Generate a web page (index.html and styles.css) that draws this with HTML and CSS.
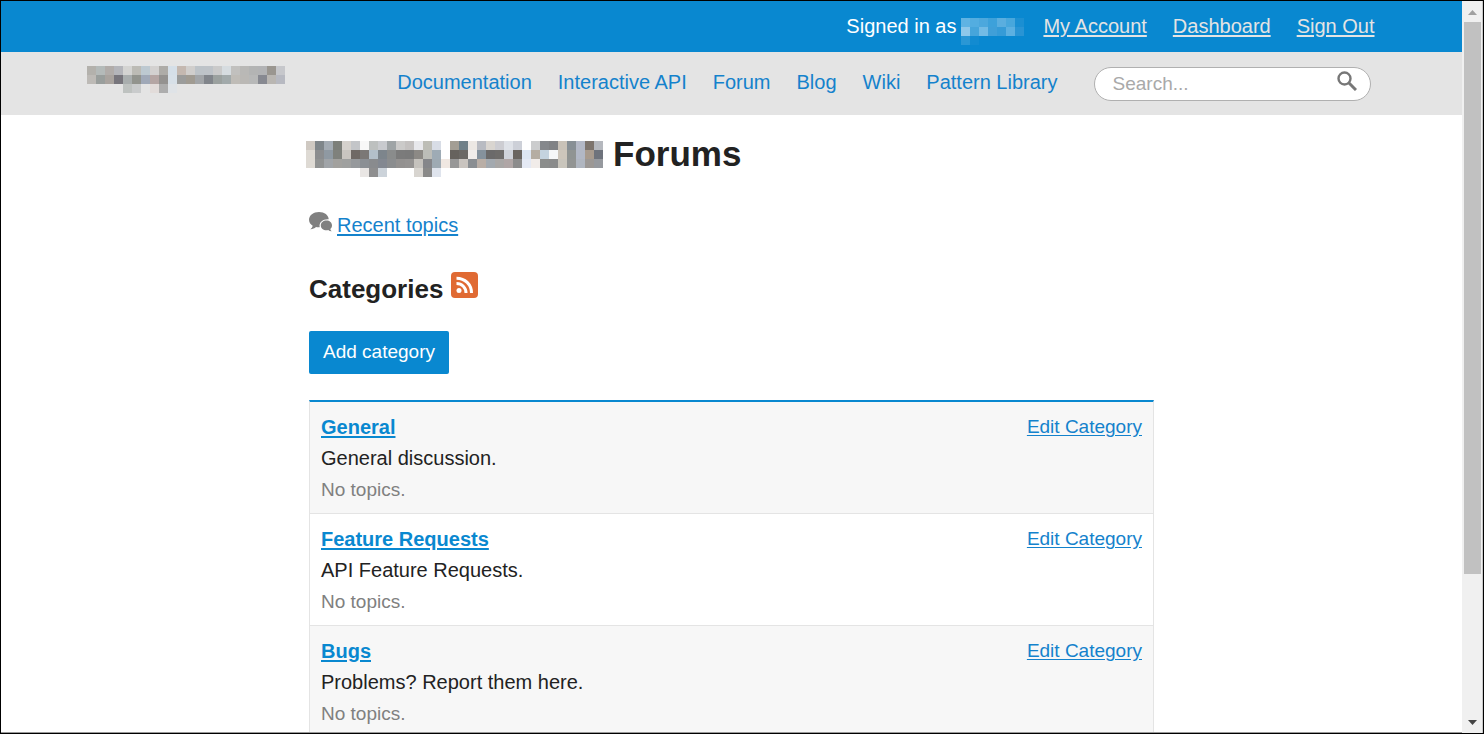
FILE: index.html
```html
<!DOCTYPE html>
<html lang="en">
<head>
<meta charset="utf-8">
<title>Forums</title>
<link rel="stylesheet" href="styles.css">
</head>
<body>
<div class="window">
  <div class="page">
    <div class="account-bar">
      <div class="wrap account-inner">
        <span class="signed-in">Signed in as <svg class="mosaic" data-name="user" role="img" aria-label="User name"></svg></span>
        <a href="#account">My Account</a>
        <a href="#dashboard">Dashboard</a>
        <a href="#signout">Sign Out</a>
      </div>
    </div>
    <header class="site-header">
      <div class="wrap header-inner">
        <a class="brand" href="#home"><svg class="mosaic" data-name="brand" role="img" aria-label="Site name"></svg></a>
        <nav class="main-nav">
          <a href="#docs">Documentation</a>
          <a href="#api">Interactive API</a>
          <a href="#forum">Forum</a>
          <a href="#blog">Blog</a>
          <a href="#wiki">Wiki</a>
          <a href="#patterns">Pattern Library</a>
        </nav>
        <form class="search" role="search">
          <input type="search" aria-label="Search" placeholder="Search...">
          <button type="button" aria-label="Submit search">
            <svg width="20" height="20" viewBox="0 0 20 20" fill="none" stroke="#777"><circle cx="7.5" cy="7.5" r="6" stroke-width="2.4"/><path d="M12 12l7 7" stroke-width="3"/></svg>
          </button>
        </form>
      </div>
    </header>
    <main class="content">
      <h1><svg class="mosaic" data-name="title" role="img" aria-label="Site name"></svg><span>Forums</span></h1>
      <p class="recent">
        <svg width="23" height="20" viewBox="0 0 23 20" fill="#808080"><path d="M10 0C4.500 0 0 3.400 0 7.700c0 2.500 1.400 4.600 3.700 6-.3 1.500-1.200 2.600-2.400 3.500 2.200.1 4.200-.7 5.700-2.100 1.200.2 2.500.3 3.700.1-.9-5 3.300-8.300 9-7.900C19.600 3.200 15.500 0 10 0z"/><path d="M17.500 8.600c-3.200 0-5.700 2.100-5.700 4.800s2.500 4.800 5.700 4.800c.6 0 1.200-.1 1.700-.2 1 .9 2.200 1.400 3.500 1.300-.8-.6-1.300-1.300-1.400-2.300 1.100-.9 1.700-2.200 1.700-3.600 0-2.700-2.400-4.800-5.500-4.800z"/></svg>
        <a href="#recent">Recent topics</a>
      </p>
      <div class="heading-row">
        <h2>Categories</h2>
        <a href="#feed" aria-label="Category feed"><svg width="27" height="26" viewBox="0 0 27 26"><rect width="27" height="26" rx="4" fill="#e06a33"/><circle cx="8" cy="18.500" r="2.500" fill="#fff"/><path d="M5.500 11.500c5.500 0 9.500 4 9.500 9.500M5.500 6.200c8.500 0 15 6.300 15 14.800" fill="none" stroke="#fff" stroke-width="3"/></svg></a>
      </div>
      <button class="add" type="button">Add category</button>
      <ul class="categories">
        <li>
          <div><h3><a href="#general">General</a></h3><p>General discussion.</p><p class="count">No topics.</p></div>
          <a class="edit" href="#edit-general">Edit Category</a>
        </li>
        <li>
          <div><h3><a href="#features">Feature Requests</a></h3><p>API Feature Requests.</p><p class="count">No topics.</p></div>
          <a class="edit" href="#edit-features">Edit Category</a>
        </li>
        <li>
          <div><h3><a href="#bugs">Bugs</a></h3><p>Problems? Report them here.</p><p class="count">No topics.</p></div>
          <a class="edit" href="#edit-bugs">Edit Category</a>
        </li>
      </ul>
    </main>
  </div>
  <div class="scrollbar" aria-hidden="true">
    <svg width="17" height="21" viewBox="0 0 17 21"><path d="M4 14l4.500-5 4.500 5z" fill="#a0a0a0"/></svg>
    <div class="track"><div class="thumb"></div></div>
    <svg width="17" height="21" viewBox="0 0 17 21"><path d="M4 8h9l-4.500 5z" fill="#444"/></svg>
  </div>
</div>
<script src="mosaic.js"></script>
</body>
</html>
```

FILE: styles.css
```css
* { box-sizing: border-box; }
body {
  margin: 0;
  background: #fff;
  color: #222;
  font: 20px/31px "Liberation Sans", Arial, sans-serif;
}
h1, h2, h3, p, ul { margin: 0; padding: 0; }
a { color: #1482cc; text-underline-offset: 2px; }
button, input { font-family: inherit; }
svg { display: block; flex: none; }

.window {
  display: flex;
  height: 100vh;
  border: 1px solid #000;
  overflow: hidden;
}
.page {
  flex: 1;
  min-width: 0;
  overflow: hidden;
  border-bottom: 1px solid #999;
}
.wrap { max-width: 1290px; margin: 0 auto; }

.account-bar { background: #0988d0; }
.account-inner {
  display: flex;
  justify-content: flex-end;
  gap: 26px;
  padding: 10px 2px 10px 0;
}
.account-inner a { color: #e4e4e4; }
.signed-in {
  display: flex;
  gap: 5px;
  height: 31px;
  color: #fff;
  white-space: nowrap;
}
.signed-in .mosaic { margin: 7px -7px 0 0; }

.site-header { background: #e4e4e4; }
.header-inner {
  display: flex;
  align-items: flex-start;
  padding: 14px 6px 14px 0;
}
.main-nav {
  display: flex;
  gap: 26px;
  margin: 1px 0 0 auto;
  white-space: nowrap;
}
.main-nav a { text-decoration: none; }
.search {
  display: flex;
  align-items: flex-start;
  width: 277px;
  height: 34px;
  margin: 1px 0 0 36px;
  padding: 0 13px 0 18px;
  border: 1px solid #b0b0b0;
  border-radius: 17px;
  background: #fff;
}
.search input {
  flex: 1;
  min-width: 0;
  height: 32px;
  padding: 0;
  border: 0;
  background: none;
  outline: none;
  font-size: 19px;
}
.search input::placeholder { color: #a9a9a9; }
.search button { padding: 3px 0 0; border: 0; background: none; }

.content { max-width: 845px; margin: 0 auto; padding-top: 26px; }
h1 {
  display: flex;
  gap: 10px;
  margin-left: -3px;
  font-size: 35px;
  line-height: 26px;
}
.recent {
  display: flex;
  gap: 5px;
  margin-top: 33px;
}
.recent svg { margin-top: 2px; }
.heading-row {
  display: flex;
  align-items: flex-start;
  gap: 8px;
  margin-top: 31px;
}
h2 { font-size: 26px; line-height: 34px; }
.add {
  display: block;
  margin-top: 25px;
  padding: 0 14px 2px;
  border: 0;
  border-radius: 2px;
  background: #0988d0;
  color: #fff;
  font-size: 19px;
  line-height: 41px;
}
.categories {
  margin-top: 26px;
  border: 1px solid #e4e4e4;
  border-top: 2px solid #0988d0;
  list-style: none;
}
.categories li {
  display: flex;
  justify-content: space-between;
  padding: 10px 11px 8px;
  border-bottom: 1px solid #e4e4e4;
}
.categories li:nth-child(odd) { background: #f7f7f7; }
h3 { font-size: 20px; line-height: 31px; }
h3 a { color: #0988d0; }
.count { color: #808080; font-size: 19px; }
.edit { font-size: 19px; line-height: 29px; }

.scrollbar {
  display: flex;
  flex-direction: column;
  padding: 0 1px 0 2px;
  border-right: 1px solid #c8c8c8;
  background: #f0f0f0;
}
.track { flex: 1; }
.thumb { height: 80%; background: #c1c1c1; }
```

FILE: mosaic.js
```js
// Each row lists hex colours; "-" leaves the cell empty.
const CELL = 9;
const mosaics = {
  user: [
    "5fb3e3 53ade0 4ca8dd 3da1da 5aaedf 48a7dc 1b8fd2",
    "8fc8ea 46a5db 72bbe5 3f9fd8 359bd7 5cb0e1 2994d4",
    "2a97d5 128bd1 - - - - -"
  ],
  brand: [
    "b3b1ac b4bab9 b1aca9 b4b5ba d4d4d2 bcbbb5 bdc9d1 d3d1d0 aeaca8 d5dfe8 c4b8b0 d0cecc bdc3c8 bec3c8 cacaca d6dce0 c1c0be b9b8b6 b3b4b4 b2b3b5 9a9690 c6c7cb",
    "bdbab6 999e9c a9a39e 77757c a9aeae 92948e a0a9b8 b5a6a4 949290 d7e0e8 9b9c9b a09b92 a2a5a8 81858b 9ba19f a2aaab bfbcb7 bab8b5 b7b8b8 878991 b9b6b2 b7b9c1",
    "- - - - bec2c0 c9cbcc - e2dcda adadad dfe3e7 - - - - - - - - - - - -"
  ],
  title: [
    "cfc9c2 7f868a a3abb3 7c7f79 d5d1cc c3c5c8 f8f8f8 bdc0bf c8cace 9fa4a6 cbcac9 c4c1c0 e8e8ec bdbdb6 d8dde6 - a39e94 708088 ece8e4 b8bbc2 d9d5d0 cdcdd2 dfe2e8 cdd0d8 - cbcccd 85888c 808285 c9c2b8 878f95 b3b8c6 7d746d b5b8be",
    "dedad4 8b8d8f 8f99a2 7f817c c9c5c0 6f6965 7b7876 b3bfc9 7d858c 8a8c8c 7b7b7b 7a7a7a 8c8985 bcbdb8 9eabb5 - 66625d 6b6864 f1edea 85929d 6b6a6a 6e6c6a cfd3da 69645f dde6f2 b5ada2 c4d3df f5f7f8 cdc6bb 909492 b2b8c5 a89b8e 6e737c",
    "dedad4 909292 a0a4a8 a2a19e 9fa09f 96999c 8b8f94 898b8e 838891 8b8d8f 939190 959392 c5c2bd 85868a 9eaab3 f0e8e2 979797 c9c4bf 8a8e92 b9aea6 a3a9af a9a7a6 b0a6a6 8c8c8c e4e9f4 f1ece9 8b8d8c 8a8b8b c9c5bc 929493 b0b6c0 9c9895 96999e",
    "- - - - - - e9e6e4 8e8e8f ccd3da - - - d8d5d0 8a8a89 dfe4ed - - - - - - - - - - - - - - - - - -"
  ]
};

document.querySelectorAll(".mosaic").forEach((svg) => {
  const rows = mosaics[svg.dataset.name].map((row) => row.split(" "));
  svg.setAttribute("width", rows[0].length * CELL);
  svg.setAttribute("height", rows.length * CELL);
  rows.forEach((row, y) => row.forEach((color, x) => {
    if (color === "-") return;
    const rect = document.createElementNS("http://www.w3.org/2000/svg", "rect");
    rect.setAttribute("x", x * CELL);
    rect.setAttribute("y", y * CELL);
    rect.setAttribute("width", CELL);
    rect.setAttribute("height", CELL);
    rect.setAttribute("fill", "#" + color);
    svg.appendChild(rect);
  }));
});
```
